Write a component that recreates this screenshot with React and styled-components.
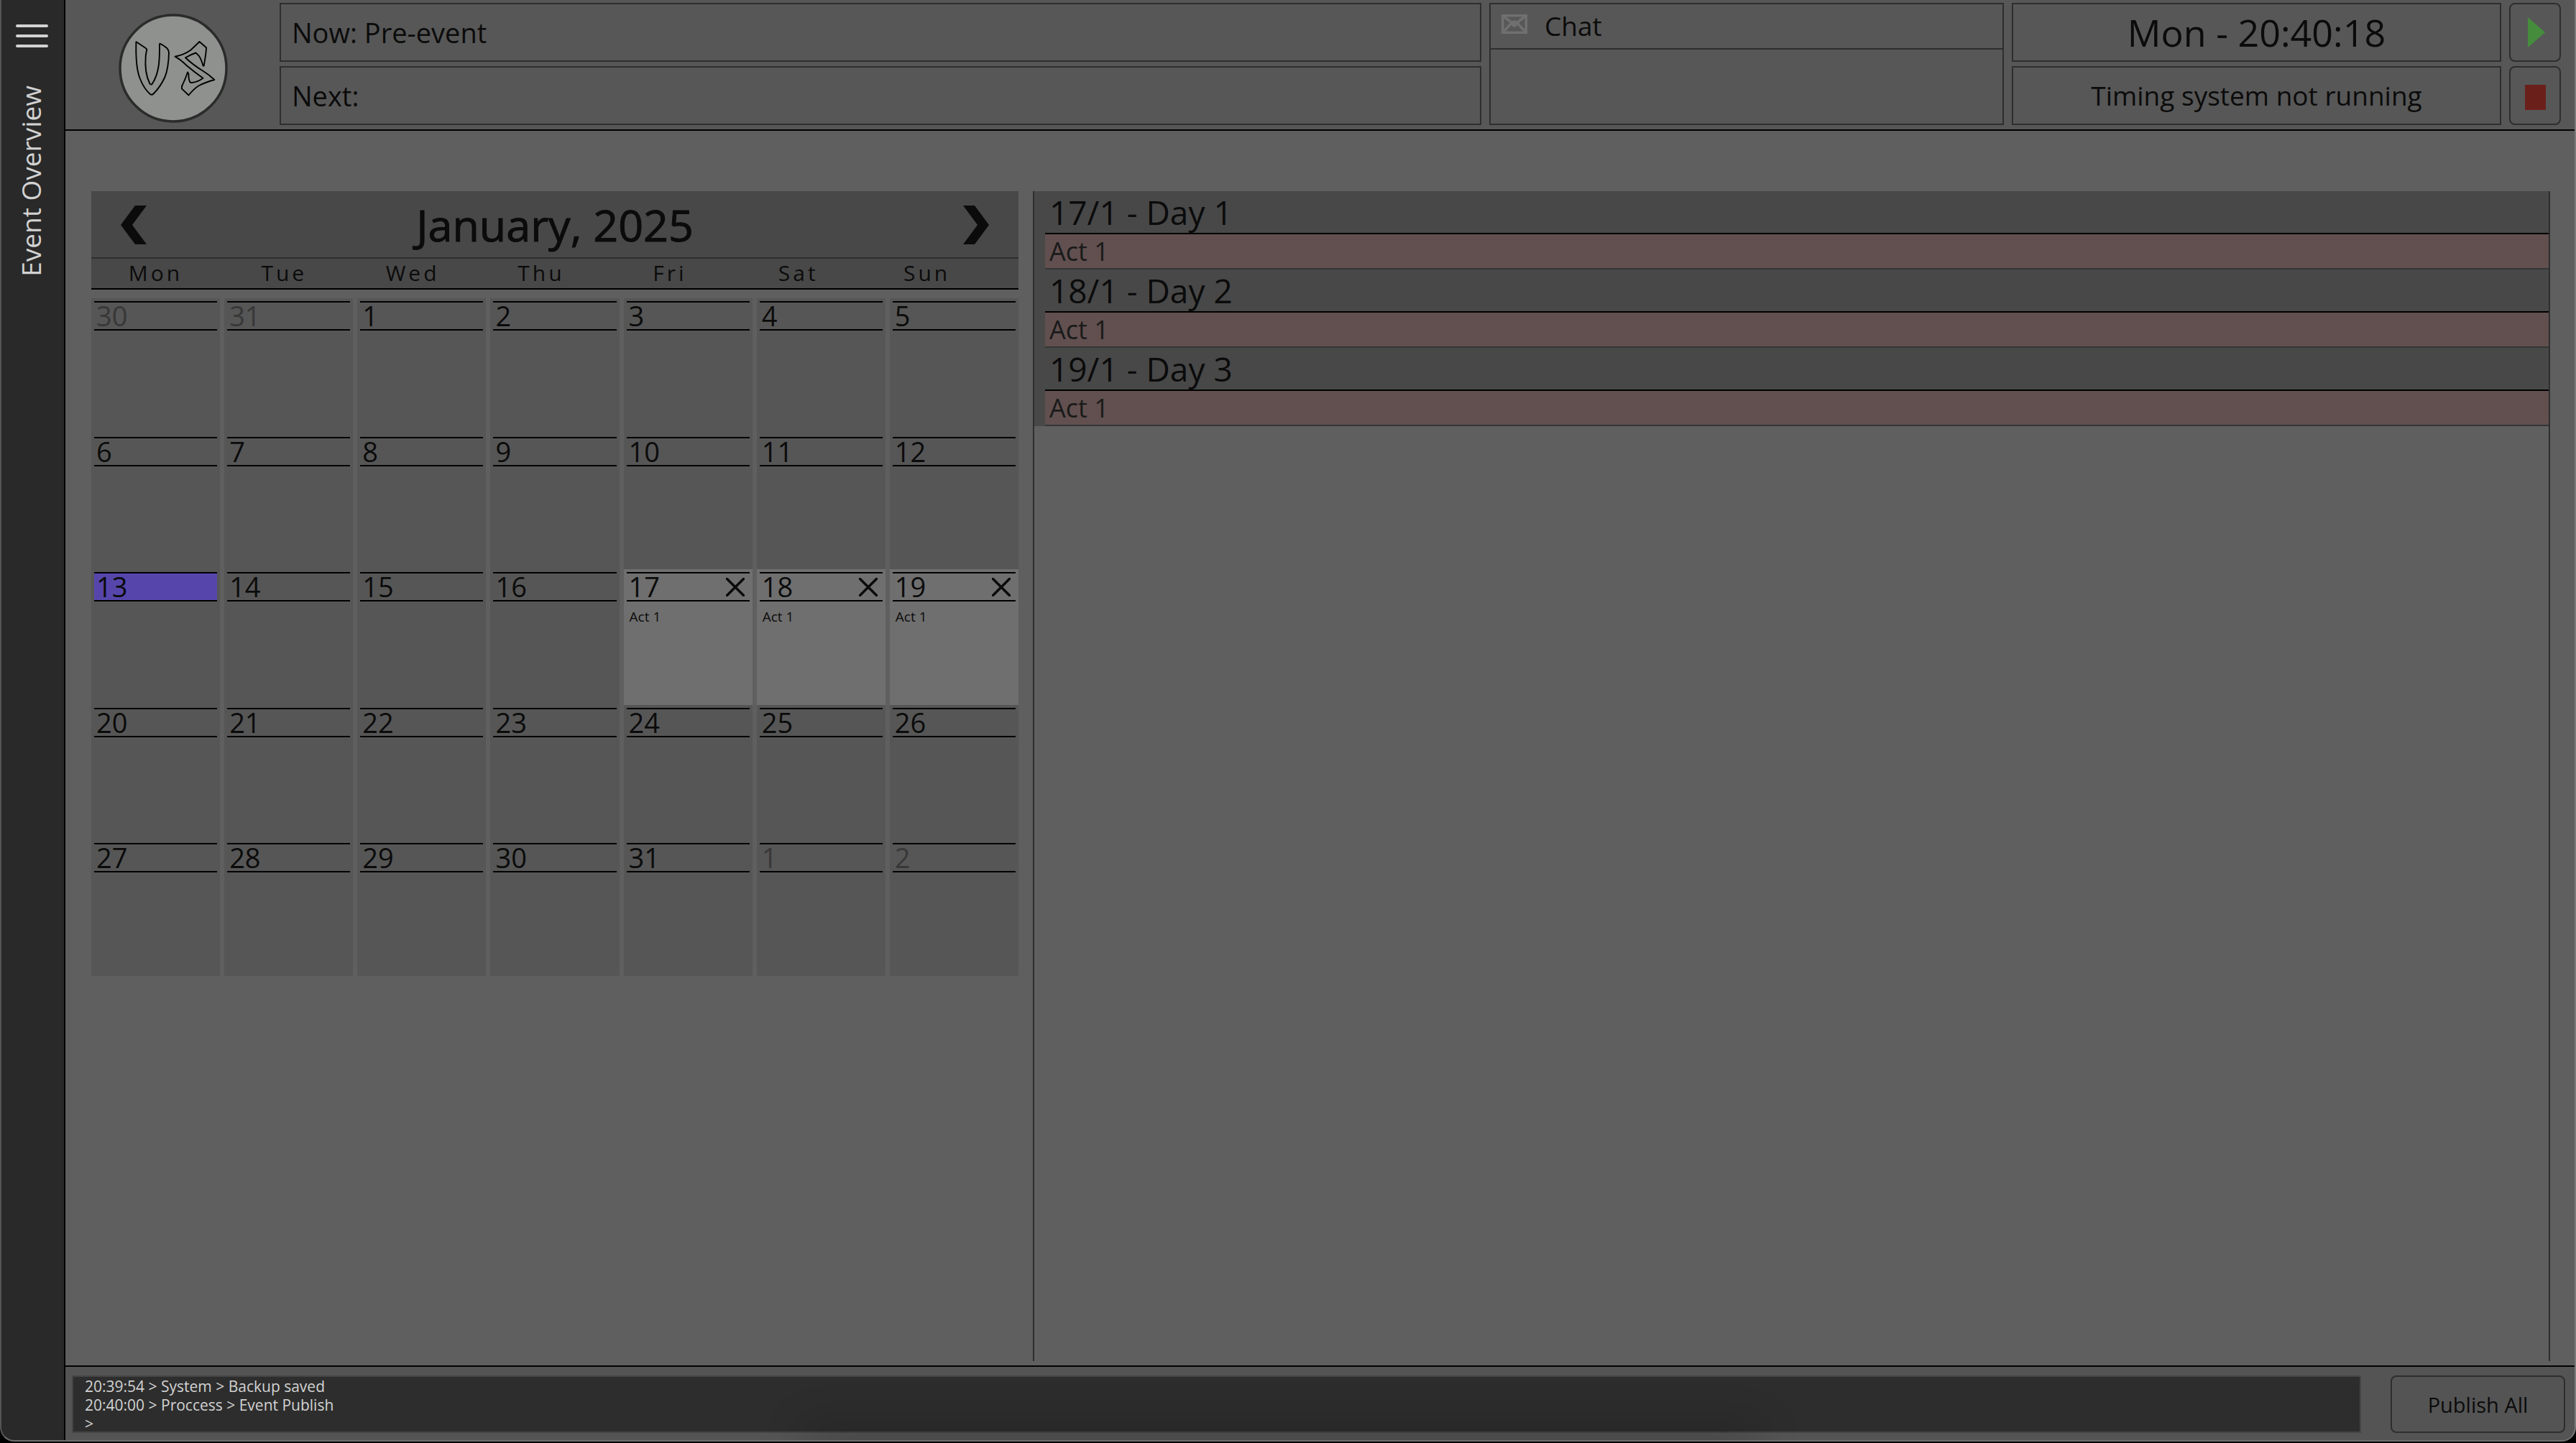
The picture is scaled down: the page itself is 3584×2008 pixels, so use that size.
import React from 'react'
import styled, { createGlobalStyle } from 'styled-components'

const GlobalStyle = createGlobalStyle`
    * {
        box-sizing: border-box;
    }

    body {
        margin: 0;
        background: #000;
        color: #0b0b0b;
        font-family: 'Open Sans', 'Noto Sans', sans-serif;
        font-size: 38px;
    }

    button {
        font-family: inherit;
        color: inherit;
        background: none;
        border: none;
        padding: 0;
        margin: 0;
    }
`;

const Window = styled.div`
    display: flex;
    height: calc(100vh - 2px);
    overflow: hidden;
    background: #5f5f5f;
    border: solid;
    border-width: 0 2px 2px;
    border-color: #6e6e6e #7a7a78 #6e6e6e #555;
    border-radius: 0 0 20px 20px;
`;

const Sidebar = styled.nav`
    flex: none;
    width: 89px;
    display: flex;
    flex-direction: column;
    align-items: center;
    gap: 53px;
    padding: 32px 2px 0 0;
    background: #292929;
    border-right: 2px solid #000;
    color: #d2d2d2;
`;

const MenuButton = styled.button`
    display: flex;
    flex-direction: column;
    gap: 10px;
    padding: 2px 0 0;
`;

const MenuLine = styled.span`
    width: 45px;
    height: 4px;
    border-radius: 2px;
    background: #d2d2d2;
`;

const PageName = styled.span`
    writing-mode: vertical-rl;
    transform: rotate(180deg);
    margin-right: 4px;
    font-size: 37px;
    line-height: 54px;
`;

const Page = styled.div`
    flex: 1;
    min-width: 0;
    display: flex;
    flex-direction: column;
`;

const TopBar = styled.header`
    flex: none;
    display: flex;
    gap: 11px;
    padding: 4px 19px 6px 74px;
    background: #575757;
    border-bottom: 2px solid #000;
`;

const Logo = styled.svg`
    flex: none;
    width: 152px;
    height: 152px;
    margin: 15px 61px 0 0;
`;

const Stack = styled.div`
    flex: ${props => props.$grow || 'none'};
    min-width: 0;
    display: flex;
    flex-direction: column;
    gap: 6px;
`;

const Field = styled.div`
    height: 82px;
    display: flex;
    align-items: center;
    padding: 0 15px;
    border: 2px solid #2e2e2e;
    line-height: 78px;
    white-space: nowrap;
`;

const Clock = styled(Field)`
    justify-content: center;
    font-size: 52px;
`;

const Status = styled(Field)`
    justify-content: center;
    font-size: 37px;
`;

const Chat = styled.section`
    flex: 712 1 0;
    min-width: 0;
    border: 2px solid #2e2e2e;
`;

const ChatHead = styled.div`
    height: 63px;
    display: flex;
    gap: 24px;
    padding: 0 15px;
    border-bottom: 2px solid #2e2e2e;
    font-size: 37px;
    line-height: 60px;

    svg {
        margin-top: 14px;
    }
`;

const IconButton = styled.button`
    width: 72px;
    height: 82px;
    display: flex;
    align-items: center;
    justify-content: center;
    border: 2px solid #2e2e2e;
    border-radius: 8px;
`;

const Content = styled.main`
    flex: 1;
    min-height: 0;
    display: flex;
    gap: 20px;
    padding: 84px 34px 6px 36px;
`;

const Calendar = styled.section`
    flex: 1290 1 0;
    min-width: 0;
`;

const MonthBar = styled.div`
    height: 94px;
    display: flex;
    align-items: center;
    justify-content: space-between;
    padding: 2px 41px 0;
    background: #484848;
    border-bottom: 2px solid #2e2e2e;

    button {
        display: flex;
    }
`;

const MonthName = styled.h1`
    margin: 0;
    font-size: 61px;
    font-weight: 400;
    line-height: 90px;
    -webkit-text-stroke: 1px #0b0b0b;
`;

const Weekdays = styled.div`
    display: grid;
    grid-template-columns: repeat(7, 1fr);
    height: 43px;
    padding-right: 38px;
    background: #484848;
    border-bottom: 2px solid #000;
    font-size: 30px;
    line-height: 40px;
    letter-spacing: 4px;
    text-align: center;
`;

const Days = styled.div`
    display: grid;
    grid-template-columns: repeat(7, 1fr);
    column-gap: 6px;
    margin-top: 12px;
`;

const Day = styled.div`
    aspect-ratio: 0.95;
    padding: 4px;
    background: ${props => props.$active ? '#6f6f6f' : '#565656'};
`;

const DayHead = styled.div`
    height: 41px;
    display: flex;
    align-items: center;
    justify-content: space-between;
    padding: 0 7px 0 3px;
    background: ${props => props.$today ? '#5646ab' : 'none'};
    border-top: 2px solid #000;
    border-bottom: 2px solid #000;
    color: ${props => props.$outside ? '#383838' : '#0b0b0b'};
    line-height: 37px;

    button {
        display: flex;
    }
`;

const DayAct = styled.div`
    padding: 8px 4px;
    font-size: 19px;
    line-height: 26px;
`;

const Schedule = styled.section`
    flex: 2107 1 0;
    min-width: 0;
    border: solid #2e2e2e;
    border-width: 0 2px;
`;

const ScheduleDay = styled.article`
    padding-left: 15px;
    background: #484848;
`;

const ScheduleTitle = styled.h2`
    height: 60px;
    margin: 0;
    padding-left: 6px;
    border-bottom: 2px solid #000;
    font-size: 46px;
    font-weight: 400;
    line-height: 58px;
`;

const ScheduleAct = styled.div`
    height: 49px;
    padding-left: 6px;
    background: #61504f;
    border-bottom: 2px solid #353535;
    color: #1a1a1a;
    font-size: 36px;
    line-height: 47px;
`;

const BottomBar = styled.footer`
    flex: none;
    position: relative;
    display: flex;
    gap: 41px;
    padding: 12px 13px 10px 9px;
    background: #545454;
    border-top: 2px solid #000;

    &::after {
        content: '';
        position: absolute;
        left: 30%;
        right: 33%;
        bottom: 0;
        box-shadow: 0 0 60px 20px rgba(0, 0, 0, 0.2);
        pointer-events: none;
    }
`;

const Log = styled.div`
    flex: 1;
    height: 80px;
    padding: 0 16px;
    background: #2d2d2d;
    border: 2px solid #454545;
    color: #d2d2d2;
    font-size: 21px;
    line-height: 26px;
`;

const PublishButton = styled.button`
    width: 243px;
    height: 80px;
    border: 2px solid #2e2e2e;
    border-radius: 8px;
    font-size: 29px;
`;

const WEEKDAYS = ['Mon', 'Tue', 'Wed', 'Thu', 'Fri', 'Sat', 'Sun']

const ACTS = {
    17: 'Act 1',
    18: 'Act 1',
    19: 'Act 1',
}

const SCHEDULE = [
    { title: '17/1 - Day 1', acts: ['Act 1'] },
    { title: '18/1 - Day 2', acts: ['Act 1'] },
    { title: '19/1 - Day 3', acts: ['Act 1'] },
]

const LOG_LINES = [
    '20:39:54 > System > Backup saved',
    '20:40:00 > Proccess > Event Publish',
    '>',
]

// five weeks, starting on Monday 30 December
const days = Array.from({ length: 35 }, (_, i) => {
    const date = new Date(2024, 11, 30 + i)
    return { key: i, number: date.getDate(), outside: date.getMonth() !== 0 }
})

const renderDay = ({ key, number, outside }) => {
    const act = !outside && ACTS[number]

    return (
        <Day key={key} $active={act}>
            <DayHead $outside={outside} $today={number === 13}>
                <span>{number}</span>
                {act && (
                    <button aria-label={`Remove day ${number}`}>
                        <svg width="26" height="26" viewBox="0 0 26 26" stroke="#0b0b0b" strokeWidth="3.5" strokeLinecap="round">
                            <path d="M1.5 1.5L24.5 24.5M24.5 1.5L1.5 24.5" />
                        </svg>
                    </button>
                )}
            </DayHead>
            {act && <DayAct>{act}</DayAct>}
        </Day>
    )
}

const VsLogo = () => (
    <Logo viewBox="0 0 152 152" fill="none" stroke="#000" strokeWidth="1.9" strokeLinejoin="round">
        <circle cx="76" cy="76" r="74" fill="#8f918f" stroke="#2b2b2b" strokeWidth="3.5" />
        <path d="M25 39.5C24 38.700 24.500 40 24.300 44C24 62 24.500 78 30 91C34 101 39 108 44.500 112.500Q46.500 113.500 48.500 111.500C54 106 60 98 64.500 88C69 77 69.700 66 70 54Q69.500 50 67 47.700Q62 43.500 57.300 41.600Q56.700 42 57 47C57 62 57 83 46.500 98Q45 99.500 43.500 97.500C38.500 88 36.500 75 37.700 59Q38.500 53 39.300 50Q38.800 48.500 37 47.500Z" />
        <path d="M112.500 39L122 47.300C122 55 119.500 67 118.700 72.500Q117.500 73.500 117 70.500C115 64 113 59 109.500 56.500L107.500 54.500Q100 57 93 61.300C99 67 108 74 117 79.500Q126 85 133.300 92Q121 95.500 112 100C106 103.500 101.500 108.500 97.500 113.500L88 104.500L88 101Q93 91 96 81.500L97.500 84Q97 92 100 96Q108 96.500 117.500 89.700Q105 81 94.500 72Q87 64.500 78.500 59.700Q92 57 100.500 50.500Q107 44.500 112.500 39Z" />
    </Logo>
)

const MailIcon = () => (
    <svg width="36" height="27" viewBox="0 0 36 27" fill="none" stroke="#707070" strokeWidth="3.5">
        <rect x="1.700" y="1.700" width="32.600" height="23.600" />
        <path d="M2 2L18 14.500L34 2M2 25L14 12M34 25L22 12" />
        <circle cx="18" cy="13" r="3" fill="#707070" />
    </svg>
)

const App = () => (
    <>
        <GlobalStyle />
        <Window>
            <Sidebar>
                <MenuButton aria-label="Menu">
                    <MenuLine />
                    <MenuLine />
                    <MenuLine />
                </MenuButton>
                <PageName>Event Overview</PageName>
            </Sidebar>
            <Page>
                <TopBar>
                    <VsLogo />
                    <Stack $grow="1672 1 0">
                        <Field>Now: Pre-event</Field>
                        <Field>Next:</Field>
                    </Stack>
                    <Chat>
                        <ChatHead>
                            <MailIcon />
                            <span>Chat</span>
                        </ChatHead>
                    </Chat>
                    <Stack $grow="681 1 0">
                        <Clock>Mon - 20:40:18</Clock>
                        <Status>Timing system not running</Status>
                    </Stack>
                    <Stack>
                        <IconButton aria-label="Start">
                            <svg width="28" height="42" viewBox="0 0 28 42" fill="#458d3d">
                                <path d="M4 0L28 21L4 42Z" />
                            </svg>
                        </IconButton>
                        <IconButton aria-label="Stop">
                            <svg width="29" height="39" viewBox="0 0 29 39" fill="#6b1f1b">
                                <rect y="4" width="29" height="35" />
                            </svg>
                        </IconButton>
                    </Stack>
                </TopBar>
                <Content>
                    <Calendar>
                        <MonthBar>
                            <button aria-label="Previous month">
                                <svg width="36" height="54" viewBox="0 0 36 54" fill="#0b0b0b">
                                    <path d="M20 0H36L16 27L36 54H20L0 27Z" />
                                </svg>
                            </button>
                            <MonthName>January, 2025</MonthName>
                            <button aria-label="Next month">
                                <svg width="36" height="54" viewBox="0 0 36 54" fill="#0b0b0b">
                                    <path d="M16 0H0L20 27L0 54H16L36 27Z" />
                                </svg>
                            </button>
                        </MonthBar>
                        <Weekdays>
                            {WEEKDAYS.map(day => <span key={day}>{day}</span>)}
                        </Weekdays>
                        <Days>
                            {days.map(renderDay)}
                        </Days>
                    </Calendar>
                    <Schedule>
                        {SCHEDULE.map(({ title, acts }) => (
                            <ScheduleDay key={title}>
                                <ScheduleTitle>{title}</ScheduleTitle>
                                {acts.map(act => <ScheduleAct key={act}>{act}</ScheduleAct>)}
                            </ScheduleDay>
                        ))}
                    </Schedule>
                </Content>
                <BottomBar>
                    <Log>
                        {LOG_LINES.map(line => <div key={line}>{line}</div>)}
                    </Log>
                    <PublishButton>Publish All</PublishButton>
                </BottomBar>
            </Page>
        </Window>
    </>
)

export default App
